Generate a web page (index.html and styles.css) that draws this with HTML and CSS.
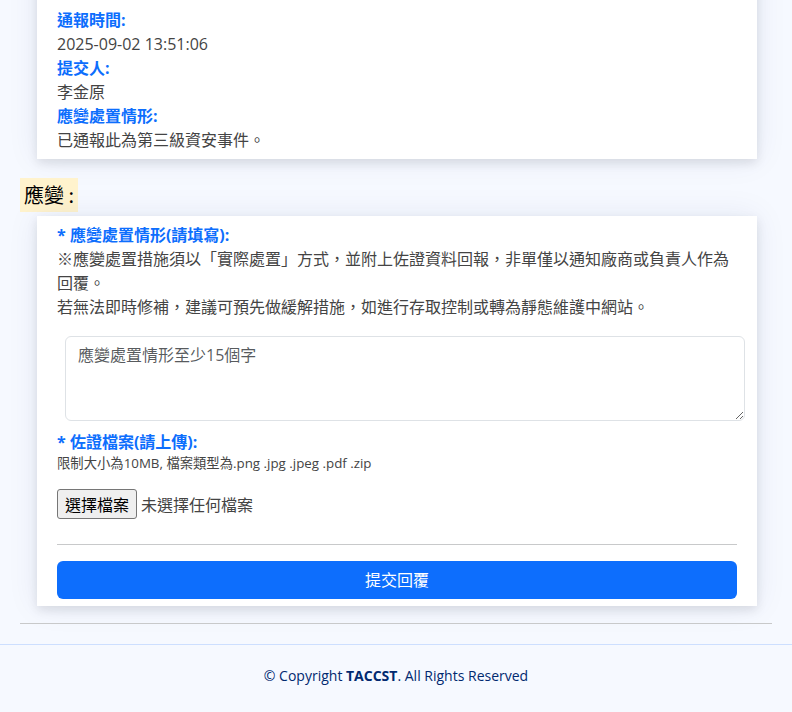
FILE: index.html
```html
<!DOCTYPE html>
<html lang="zh-Hant">
<head>
<meta charset="utf-8">
<title>應變</title>
<link rel="stylesheet" href="styles.css">
</head>
<body>
<main class="main">
  <section class="card card-info">
    <div class="label">通報時間:</div>
    <div class="value">2025-09-02 13:51:06</div>
    <div class="label">提交人:</div>
    <div class="value">李金原</div>
    <div class="label">應變處置情形:</div>
    <div class="value">已通報此為第三級資安事件。</div>
  </section>

  <div class="section-title"><mark class="mark">應變 :</mark></div>

  <section class="card card-form">
    <div class="label">* 應變處置情形(請填寫):</div>
    <div class="value">※應變處置措施須以「實際處置」方式，並附上佐證資料回報，非單僅以通知廠商或負責人作為回覆。<br>若無法即時修補，建議可預先做緩解措施，如進行存取控制或轉為靜態維護中網站。</div>
    <textarea class="textarea" rows="3" placeholder="應變處置情形至少15個字"></textarea>
    <div class="label label-file">* 佐證檔案(請上傳):</div>
    <div class="hint">限制大小為10MB, 檔案類型為.png .jpg .jpeg .pdf .zip</div>
    <div class="file-row">
      <span class="file-btn">選擇檔案</span>
      <span class="file-name">未選擇任何檔案</span>
    </div>
    <hr class="rule">
    <button class="submit" type="button">提交回覆</button>
  </section>

  <hr class="page-rule">
</main>
<footer class="footer">
  © Copyright <strong>TACCST</strong>. All Rights Reserved
</footer>
</body>
</html>
```
FILE: styles.css
```css
html, body {
  margin: 0;
  padding: 0;
}
body {
  background: #f6f9ff;
  font-family: "Open Sans", "Noto Sans CJK TC", sans-serif;
  font-size: 16px;
  line-height: 24px;
  color: #444444;
  min-height: 712px;
}
.main {
  padding: 0 20px;
  display: flex;
  flex-direction: column;
}
.card {
  background: #ffffff;
  width: 720px;
  margin-left: 17px;
  box-sizing: border-box;
  box-shadow: 0 4px 10px rgba(0, 0, 0, 0.10), 0 0 30px rgba(1, 41, 112, 0.08);
}
.card-info {
  margin-top: -40px;
  padding: 48px 20px 7px;
}
.card-form {
  margin-top: 4px;
  padding: 7px 20px 7px;
  display: flex;
  flex-direction: column;
}
.label {
  color: #0d6efd;
  font-weight: 700;
}
.value {
  color: #444444;
}
.section-title {
  margin-top: 19px;
  line-height: 0;
}
.mark {
  display: inline-block;
  background: #fff3cd;
  color: #000000;
  font-size: 20px;
  line-height: 30px;
  padding: 2px 4px;
  font-family: "Noto Sans CJK TC", sans-serif;
  font-weight: 400;
}
.textarea {
  margin: 17px 0 0 8px;
  width: 680px;
  height: 85px;
  box-sizing: border-box;
  border: 1px solid #dee2e6;
  border-radius: 6px;
  padding: 6px 12px;
  font: inherit;
  font-size: 16px;
  line-height: 24px;
  color: #212529;
  resize: vertical;
}
.textarea::placeholder {
  color: rgba(33, 37, 41, 0.75);
}
.label-file {
  margin-top: 9px;
}
.hint {
  font-size: 13.33px;
  line-height: 19px;
  color: #444444;
}
.file-row {
  margin-top: 16px;
  display: flex;
  align-items: center;
  gap: 4px;
  height: 30px;
}
.file-btn {
  display: inline-flex;
  align-items: center;
  justify-content: center;
  height: 30px;
  width: 80px;
  box-sizing: border-box;
  background: #efefef;
  border: 1px solid #767676;
  border-radius: 3px;
  color: #000000;
  font-family: "Noto Sans CJK TC", sans-serif;
}
.file-name {
  color: #444444;
  font-family: "Noto Sans CJK TC", sans-serif;
}
.rule {
  width: 100%;
  margin: 25px 0 16px;
  border: 0;
  border-top: 1px solid #c8c9ca;
  height: 0;
}
.submit {
  width: 100%;
  height: 38px;
  background: #0d6efd;
  color: #ffffff;
  border: 0;
  border-radius: 6px;
  font: inherit;
  font-size: 16px;
  line-height: 24px;
}
.page-rule {
  margin: 17px 0 20px;
  border: 0;
  border-top: 1px solid #c8c9ca;
  height: 0;
}
.footer {
  border-top: 1px solid #cddfff;
  padding: 20px 0;
  font-size: 14px;
  line-height: 21px;
  text-align: center;
  color: #012970;
}
.footer strong {
  font-weight: 700;
}
```
